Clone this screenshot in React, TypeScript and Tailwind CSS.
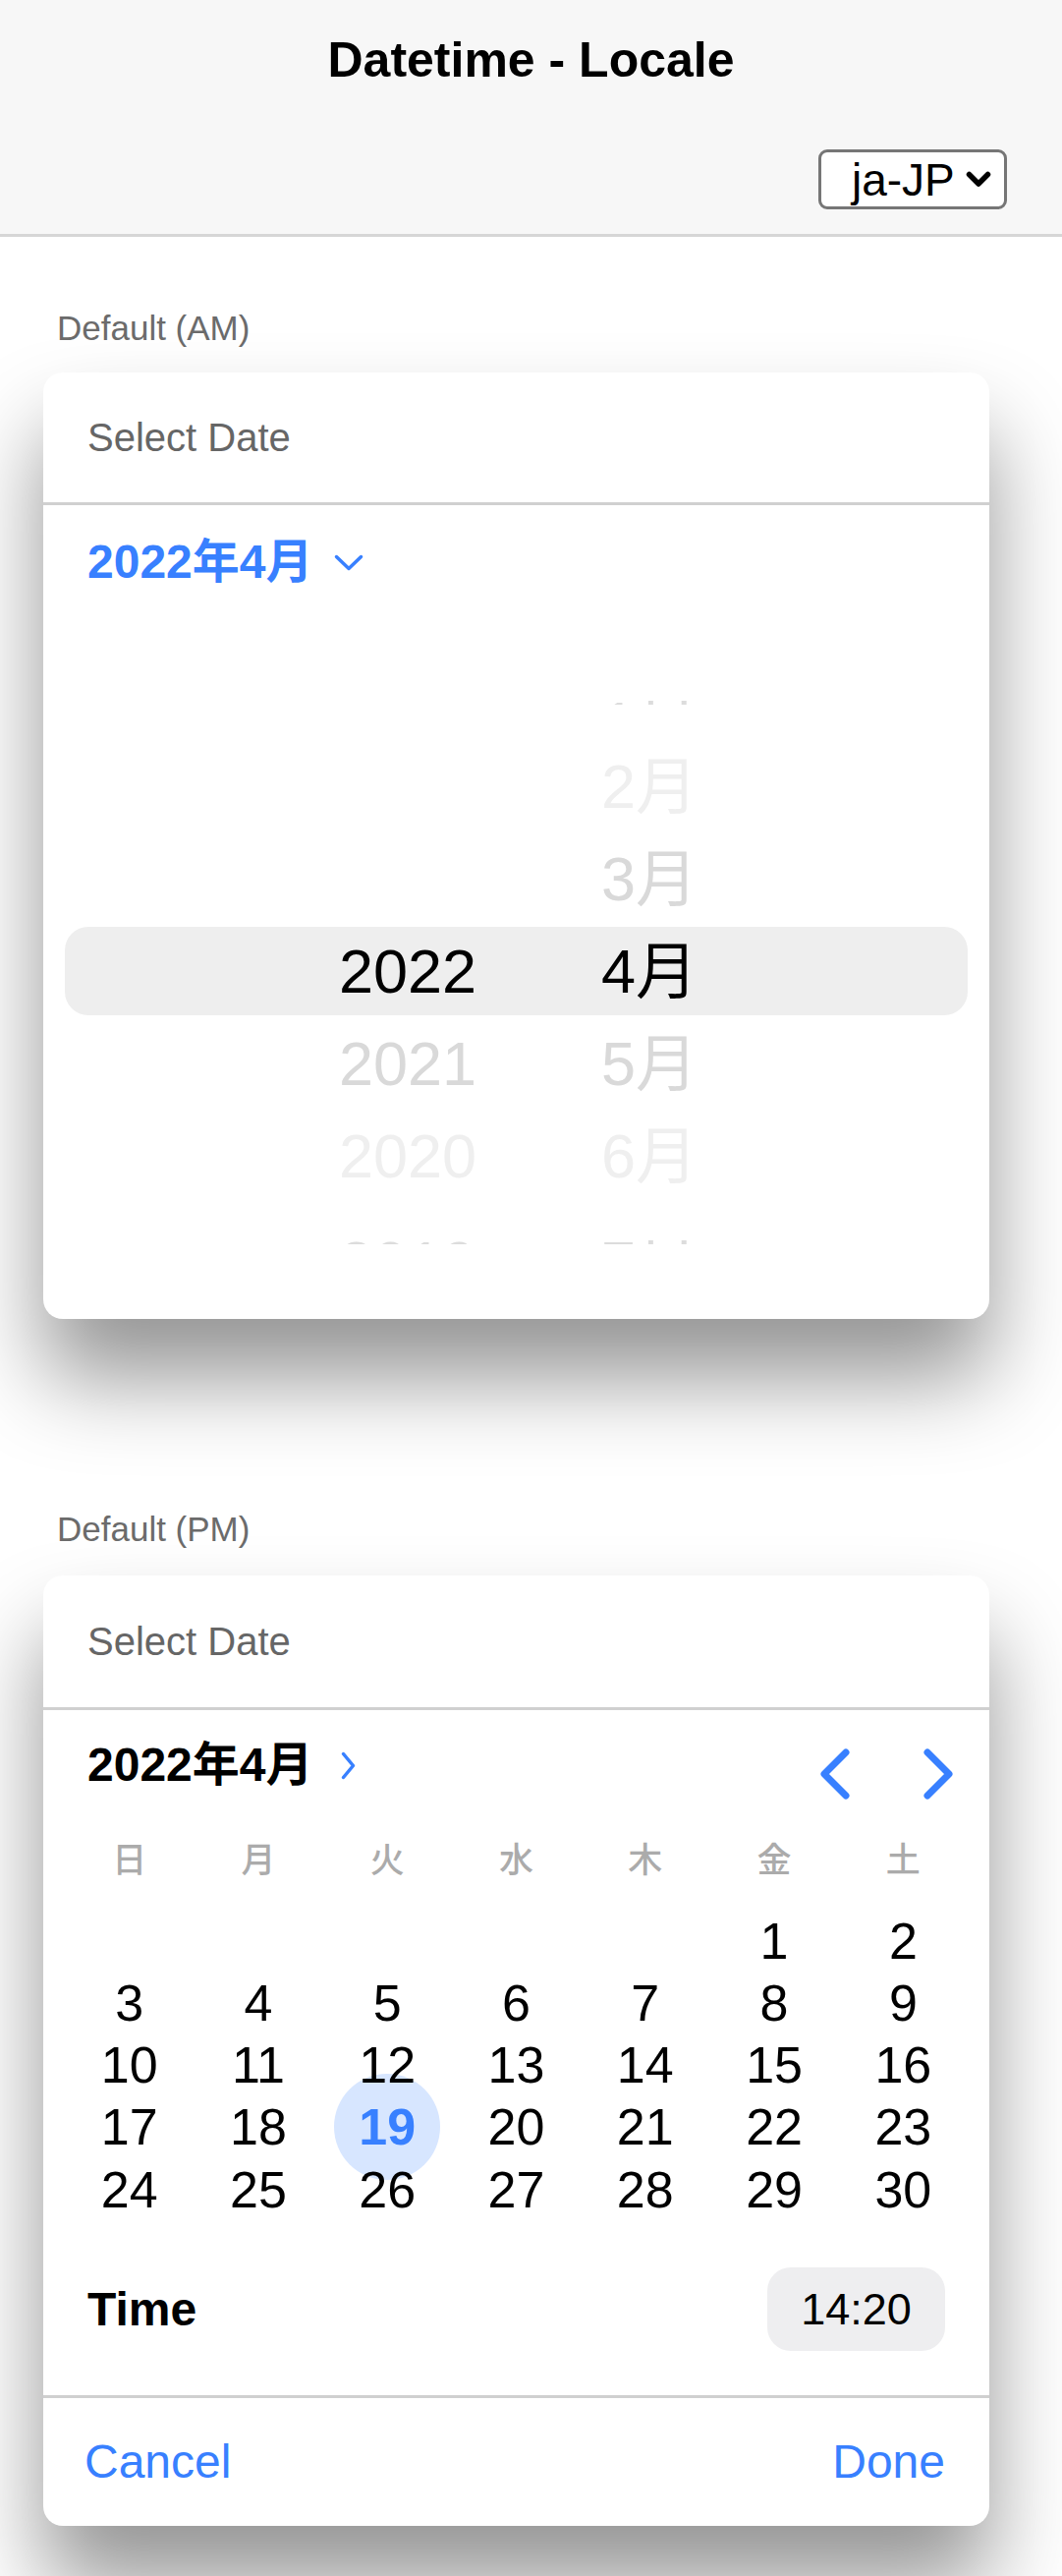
import React from 'react';

const BLUE = '#3880ff';

const weekdays = ['日', '月', '火', '水', '木', '金', '土'];

// April 2022 starts on a Friday
const weeks: (number | null)[][] = [
  [null, null, null, null, null, 1, 2],
  [3, 4, 5, 6, 7, 8, 9],
  [10, 11, 12, 13, 14, 15, 16],
  [17, 18, 19, 20, 21, 22, 23],
  [24, 25, 26, 27, 28, 29, 30],
];

const years = ['', '', '', '2022', '2021', '2020', '2019'];
const months = ['1月', '2月', '3月', '4月', '5月', '6月', '7月'];
const wheelColor = ['', 'text-[#efefef]', 'text-[#d9d9d9]', 'text-black', 'text-[#d9d9d9]', 'text-[#efefef]', ''];

function ChevronDown() {
  return (
    <svg width="30" height="17" viewBox="0 0 30 17" fill="none">
      <path d="M2.5 2.5 L15 14.5 L27.5 2.5" stroke={BLUE} strokeWidth="3.5" strokeLinecap="round" strokeLinejoin="round" />
    </svg>
  );
}

function ChevronRightSmall() {
  return (
    <svg width="15" height="29" viewBox="0 0 15 29" fill="none">
      <path d="M2.5 2.5 L12.5 14.5 L2.5 26.5" stroke={BLUE} strokeWidth="3.5" strokeLinecap="round" strokeLinejoin="round" />
    </svg>
  );
}

function NavChevron({ dir }: { dir: 'left' | 'right' }) {
  const d = dir === 'left' ? 'M26 4 L4 26 L26 48' : 'M4 4 L26 26 L4 48';
  return (
    <svg width="30" height="52" viewBox="0 0 30 52" fill="none">
      <path d={d} stroke={BLUE} strokeWidth="7" strokeLinecap="round" strokeLinejoin="round" />
    </svg>
  );
}

function CardHeader({ h }: { h: string }) {
  return (
    <>
      <div className={`${h} flex items-center pl-[45px] text-[40px] leading-none text-[#666666]`}>Select Date</div>
      <div className="h-[3px] bg-[#d0d0d0]" />
    </>
  );
}

// a wheel item that has rotated almost out of view: only a thin top sliver shows
function Sliver({ text, offset }: { text: string; offset: string }) {
  return (
    <div className={`${offset} h-[4px] overflow-hidden text-[#dcdcdc]`}>
      <div className="-mt-[8px] text-[63px] leading-none">{text}</div>
    </div>
  );
}

function WheelItem({ text, i }: { text: string; i: number }) {
  if (!text) return <div className="h-[94px]" />;
  if (i === 0) {
    return (
      <div className="h-[94px]">
        <Sliver text={text} offset="mt-[54px]" />
      </div>
    );
  }
  if (i === 6) {
    return (
      <div className="h-[94px]">
        <Sliver text={text} offset="mt-[39px]" />
      </div>
    );
  }
  return <div className={`h-[94px] flex items-center text-[63px] leading-none ${wheelColor[i]}`}>{text}</div>;
}

function WheelCard() {
  return (
    <div className="ml-[44px] w-[963px] h-[963px] rounded-[20px] bg-white shadow-[0_60px_90px_rgba(0,0,0,0.42)] overflow-hidden">
      <CardHeader h="h-[132px]" />
      <div className="h-[116px] flex items-center pl-[45px] gap-[22px]">
        <span className="text-[48px] leading-none font-bold text-[#3880ff]">2022年4月</span>
        <ChevronDown />
      </div>
      <div className="relative mx-[22px] mt-[29px] h-[658px]">
        <div className="absolute inset-x-0 top-[284px] h-[90px] rounded-[24px] bg-[#eeeeee]" />
        <div className="relative flex pl-[279px]">
          <div className="w-[141px] flex flex-col">
            {years.map((y, i) => (
              <WheelItem key={i} text={y} i={i} />
            ))}
          </div>
          <div className="ml-[126px] flex flex-col">
            {months.map((m, i) => (
              <WheelItem key={i} text={m} i={i} />
            ))}
          </div>
        </div>
      </div>
    </div>
  );
}

function CalendarCard() {
  return (
    <div className="ml-[44px] w-[963px] h-[967px] rounded-[20px] bg-white shadow-[0_60px_90px_rgba(0,0,0,0.42)] overflow-hidden">
      <CardHeader h="h-[134px]" />
      <div className="h-[112px] flex items-center justify-between pl-[45px] pr-[37px]">
        <div className="flex items-center gap-[29px]">
          <span className="text-[48px] leading-none font-bold text-black">2022年4月</span>
          <ChevronRightSmall />
        </div>
        <div className="flex items-center gap-[75px] mt-[18px]">
          <NavChevron dir="left" />
          <NavChevron dir="right" />
        </div>
      </div>
      <div className="px-[22px]">
        <div className="grid grid-cols-7 h-[80px] items-center">
          {weekdays.map((w) => (
            <div key={w} className="text-center text-[35px] leading-none font-medium text-[#ababab]">
              {w}
            </div>
          ))}
        </div>
        <div className="relative isolate pt-[11px]">
          {weeks.map((week, r) => (
            <div key={r} className="grid grid-cols-7 h-[63.25px]">
              {week.map((d, c) => (
                <div key={c} className="relative flex items-center justify-center">
                  {d === 19 && (
                    <div className="absolute -z-10 left-1/2 top-1/2 w-[108px] h-[108px] -translate-x-1/2 -translate-y-1/2 rounded-full bg-[#d7e6ff]" />
                  )}
                  {d !== null && (
                    <span
                      className={`relative text-[52px] leading-none ${d === 19 ? 'font-bold text-[#3880ff]' : 'text-black'}`}
                    >
                      {d}
                    </span>
                  )}
                </div>
              ))}
            </div>
          ))}
        </div>
      </div>
      <div className="flex items-start justify-between pl-[45px] pr-[45px] pt-[48px] pb-[45px]">
        <div className="h-[85px] flex items-center text-[48px] leading-none font-bold text-black">Time</div>
        <div className="w-[181px] h-[85px] rounded-[24px] bg-[#eeeef0] flex items-center justify-center text-[45px] leading-none text-black">
          14:20
        </div>
      </div>
      <div className="h-[3px] bg-[#d0d0d0]" />
      <div className="h-[130px] flex items-center justify-between pl-[42px] pr-[45px] text-[48px] leading-none text-[#3880ff]">
        <span>Cancel</span>
        <span>Done</span>
      </div>
    </div>
  );
}

export default function App() {
  return (
    <div className="min-h-[2621px] bg-white font-['Liberation_Sans','Noto_Sans_CJK_JP',sans-serif]">
      <header className="h-[241px] bg-[#f7f7f7] border-b-[3px] border-[#d6d6d6]">
        <div className="h-[122px] flex items-center justify-center text-[50px] leading-none font-bold text-black">
          Datetime - Locale
        </div>
        <div className="flex justify-end pr-[56px] mt-[30px]">
          <div className="w-[192px] h-[61px] rounded-[9px] border-[3px] border-[#767676] bg-white flex items-center pl-[31px] gap-[11px]">
            <span className="text-[46px] leading-none text-black">ja-JP</span>
            <svg width="26" height="17" viewBox="0 0 26 17" fill="none">
              <path d="M3.5 3.5 L13 13 L22.5 3.5" stroke="#000" strokeWidth="5.5" strokeLinecap="round" strokeLinejoin="round" />
            </svg>
          </div>
        </div>
      </header>

      <div className="pl-[58px] mt-[72px] h-[40px] flex items-center text-[35px] leading-none text-[#6b6b6b]">Default (AM)</div>
      <div className="mt-[26px]">
        <WheelCard />
      </div>

      <div className="pl-[58px] mt-[193px] h-[40px] flex items-center text-[35px] leading-none text-[#6b6b6b]">Default (PM)</div>
      <div className="mt-[28px] pb-[60px]">
        <CalendarCard />
      </div>
    </div>
  );
}
